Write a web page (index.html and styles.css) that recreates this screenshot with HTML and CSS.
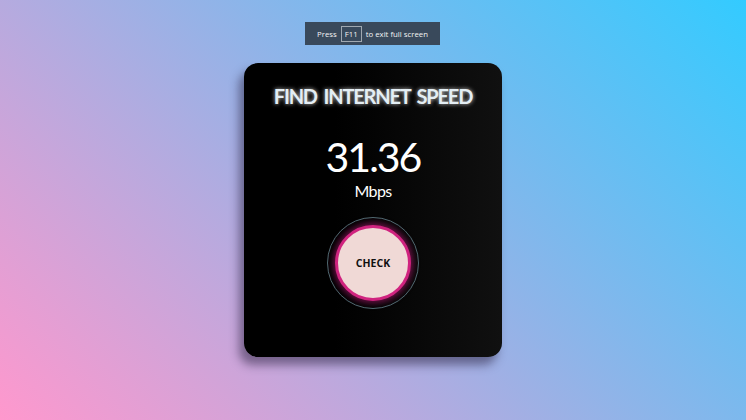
FILE: index.html
```html
<!DOCTYPE html>
<html>
<head>
<meta charset="utf-8">
<link rel="stylesheet" href="styles.css">
</head>
<body>
<div class="fs-note">Press <span class="key">F11</span> to exit full screen</div>
<div class="card">
  <h1 class="title">FIND INTERNET SPEED</h1>
  <div class="speed">31.36</div>
  <div class="unit">Mbps</div>
  <div class="ring">
    <button class="check">CHECK</button>
  </div>
</div>
</body>
</html>
```

FILE: styles.css
```css
html, body {
  margin: 0;
  padding: 0;
  height: 100%;
}
body {
  background: linear-gradient(45deg, #ff98cd 0%, #33cbff 100%);
  display: flex;
  align-items: center;
  justify-content: center;
  font-family: Lato, "Open Sans", sans-serif;
}
.fs-note {
  position: fixed;
  top: 22px;
  left: 305px;
  width: 135px;
  height: 23px;
  background: #39495b;
  color: #f4f4f4;
  font-family: "Open Sans", sans-serif;
  font-size: 7.8px;
  display: flex;
  align-items: center;
  justify-content: center;
  gap: 4px;
}
.key {
  border: 1px solid #a0a8b0;
  padding: 2px 3px;
  line-height: 10px;
}
.card {
  width: 258px;
  height: 294px;
  box-sizing: border-box;
  border-radius: 14px;
  background: linear-gradient(to right, #000 35%, #101010 100%);
  box-shadow: -5px 8px 10px rgba(40, 30, 60, 0.5);
  display: flex;
  flex-direction: column;
  align-items: center;
  padding-top: 20px;
}
.title {
  margin: 0;
  font-size: 20px;
  font-weight: 700;
  letter-spacing: -1.2px;
  word-spacing: 3px;
  color: #e4eef4;
  line-height: 26px;
  text-shadow: 0 0 4px rgba(255, 255, 255, 0.8);
}
.speed {
  margin-top: 24px;
  font-size: 41px;
  letter-spacing: -2px;
  line-height: 48px;
  color: #fff;
}
.unit {
  font-size: 16px;
  letter-spacing: -0.6px;
  line-height: 20px;
  color: #fff;
}
.ring {
  margin-top: 16px;
  width: 90px;
  height: 90px;
  border: 1px solid #4f6c72;
  border-radius: 50%;
  display: flex;
  align-items: center;
  justify-content: center;
}
.check {
  width: 76px;
  height: 76px;
  border-radius: 50%;
  border: 3px solid #d0237f;
  background: #f0d9d6;
  box-shadow: 0 0 6px 2px rgba(200, 30, 130, 0.55);
  font-family: "Open Sans", sans-serif;
  font-weight: 700;
  font-size: 10.5px;
  color: #111;
  padding: 0;
  box-sizing: border-box;
}
```
